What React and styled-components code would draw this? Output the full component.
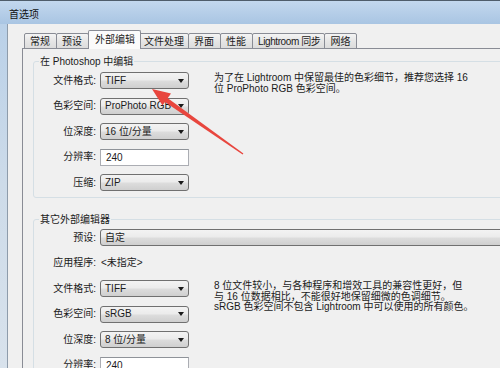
import React from "react";
import styled, { createGlobalStyle } from "styled-components";

const GlobalStyle = createGlobalStyle`
  html, body {
    margin: 0;
    padding: 0;
    background: #f0f0f0;
  }
  body {
    font-family: "Liberation Sans", "Noto Sans CJK SC", sans-serif;
    font-size: 10px;
    color: #1b1b1b;
  }
`;

const Window = styled.div`
  position: relative;
  width: 500px;
  height: 368px;
  overflow: hidden;
  display: flex;
  flex-direction: column;
  border-top: 1px solid #4f5d6b;
  box-sizing: border-box;
  background: linear-gradient(#b7cfe8, #cddbe9 50%, #d8e2ec);
`;

const TitleBar = styled.div`
  height: 23px;
  flex: none;
  display: flex;
  align-items: center;
  padding: 2px 0 0 9px;
  box-sizing: border-box;
  font-size: 10px;
  color: #111;
  background: linear-gradient(#c3d8ee, #a9c5e3);
`;

const Body = styled.div`
  flex: 1;
  display: flex;
  padding-left: 7px;
  min-height: 0;
`;

const Client = styled.div`
  flex: 1;
  background: #f0f0f0;
  border-left: 1px solid #8e9cab;
  padding-top: 6px;
  min-width: 0;
`;

const TabStrip = styled.div`
  display: flex;
  align-items: flex-end;
  height: 19px;
  padding-left: 16px;
  position: relative;
  z-index: 1;
`;

const Tab = styled.div`
  box-sizing: border-box;
  min-width: 33px;
  height: ${(p) => (p.$active ? "19px" : "16px")};
  margin: ${(p) => (p.$active ? "0 -2px 0 -1px" : "0 0 0 -1px")};
  padding: ${(p) => (p.$active ? "2px 5px 0 6px" : "1px 4px 0 5px")};
  border: 1px solid #898c95;
  border-bottom: ${(p) => (p.$active ? "none" : "1px solid #898c95")};
  border-radius: 2px 2px 0 0;
  background: ${(p) =>
    p.$active ? "#fbfbfb" : "linear-gradient(#f4f4f4, #e6e6e6 50%, #dcdcdc)"};
  font-size: 10px;
  line-height: 13px;
  letter-spacing: ${(p) => (p.$tight ? "-0.4px" : "0")};
  white-space: nowrap;
  position: relative;
  z-index: ${(p) => (p.$active ? 2 : 1)};
  &:first-child {
    margin-left: 0;
  }
`;

const Panel = styled.div`
  margin-left: 14px;
  margin-top: -1px;
  width: 640px;
  height: 400px;
  border: 1px solid #898c95;
  background: #f0f0f0;
  padding: 6.5px 0 0 10px;
  box-sizing: border-box;
`;

const Group = styled.fieldset`
  margin: ${(p) => (p.$spaced ? "16px 0 0 0" : "0")};
  padding: ${(p) => (p.$spaced ? "3.5px" : "4.5px")} 0 5.5px 0;
  width: 600px;
  min-width: 0;
  border: 1px solid #d5dfe5;
  border-radius: 3px;
  box-sizing: border-box;
`;

const Legend = styled.legend`
  margin-left: 5px;
  padding: 0 1px;
  font-size: 10px;
  line-height: 12px;
`;

const Form = styled.div`
  display: grid;
  grid-template-columns: 62px 89px 1fr;
  grid-auto-rows: 17px;
  column-gap: 4px;
  row-gap: 8.5px;
  align-items: center;
`;

const Label = styled.div`
  grid-column: 1;
  text-align: right;
  font-size: 10px;
  line-height: 12px;
  white-space: nowrap;
`;

const Dropdown = styled.div`
  grid-column: ${(p) => (p.$wide ? "2 / span 2" : "2")};
  height: 17px;
  box-sizing: border-box;
  display: flex;
  align-items: center;
  justify-content: space-between;
  padding: 0 4px 0 4px;
  border: 1px solid #707070;
  border-radius: 3px;
  background: linear-gradient(#f3f3f3, #ebebeb 48%, #dddddd 52%, #cfcfcf);
  font-size: 10px;
  line-height: 12px;
  white-space: nowrap;
`;

const Caret = styled.span`
  width: 0;
  height: 0;
  border-left: 3.5px solid transparent;
  border-right: 3.5px solid transparent;
  border-top: 4px solid #1a1a1a;
`;

const TextInput = styled.div`
  grid-column: 2;
  height: 17px;
  box-sizing: border-box;
  display: flex;
  align-items: center;
  padding-left: 5px;
  background: #fff;
  border: 1px solid #abadb3;
  border-top-color: #8f9399;
  font-size: 10px;
`;

const Value = styled.div`
  grid-column: 2;
  padding-left: 1px;
  font-size: 10px;
  line-height: 12px;
  white-space: nowrap;
`;

const Note = styled.div`
  grid-column: 3;
  grid-row: ${(p) => p.$row} / span 3;
  align-self: start;
  padding: 1px 0 0 21px;
  font-size: 10px;
  line-height: 10.7px;
  white-space: nowrap;
`;

const Arrow = styled.svg`
  position: absolute;
  left: 0;
  top: 0;
  pointer-events: none;
`;

function Select({ value, wide }) {
  return (
    <Dropdown $wide={wide}>
      <span>{value}</span>
      {!wide && <Caret />}
    </Dropdown>
  );
}

const tabs = ["常规", "预设", "外部编辑", "文件处理", "界面", "性能", "Lightroom 同步", "网络"];

export default function App() {
  return (
    <>
      <GlobalStyle />
      <Window>
        <TitleBar>首选项</TitleBar>
        <Body>
          <Client>
            <TabStrip>
              {tabs.map((t) => (
                <Tab key={t} $active={t === "外部编辑"} $tight={t.startsWith("Light")}>
                  {t}
                </Tab>
              ))}
            </TabStrip>
            <Panel>
              <Group>
                <Legend>在 Photoshop 中编辑</Legend>
                <Form>
                  <Label>文件格式:</Label>
                  <Select value="TIFF" />
                  <Note $row={1}>
                    为了在 Lightroom 中保留最佳的色彩细节，推荐您选择 16
                    <br />
                    位 ProPhoto RGB 色彩空间。
                  </Note>
                  <Label>色彩空间:</Label>
                  <Select value="ProPhoto RGB" />
                  <Label>位深度:</Label>
                  <Select value="16 位/分量" />
                  <Label>分辨率:</Label>
                  <TextInput>240</TextInput>
                  <Label>压缩:</Label>
                  <Select value="ZIP" />
                </Form>
              </Group>
              <Group $spaced>
                <Legend>其它外部编辑器</Legend>
                <Form>
                  <Label>预设:</Label>
                  <Select value="自定" wide />
                  <Label>应用程序:</Label>
                  <Value>&lt;未指定&gt;</Value>
                  <Label>文件格式:</Label>
                  <Select value="TIFF" />
                  <Note $row={3}>
                    8 位文件较小，与各种程序和增效工具的兼容性更好，但
                    <br />
                    与 16 位数据相比，不能很好地保留细微的色调细节。
                    <br />
                    sRGB 色彩空间不包含 Lightroom 中可以使用的所有颜色。
                  </Note>
                  <Label>色彩空间:</Label>
                  <Select value="sRGB" />
                  <Label>位深度:</Label>
                  <Select value="8 位/分量" />
                  <Label>分辨率:</Label>
                  <TextInput>240</TextInput>
                </Form>
              </Group>
            </Panel>
          </Client>
        </Body>
        <Arrow width="500" height="368" viewBox="0 0 500 368">
          <polygon points="243.4,152.6 242.6,153.4 164.5,100.8 166.5,96.2" fill="#e8463e" />
          <polygon points="152,88 171,92.5 162.5,104.5" fill="#e8463e" />
        </Arrow>
      </Window>
    </>
  );
}
